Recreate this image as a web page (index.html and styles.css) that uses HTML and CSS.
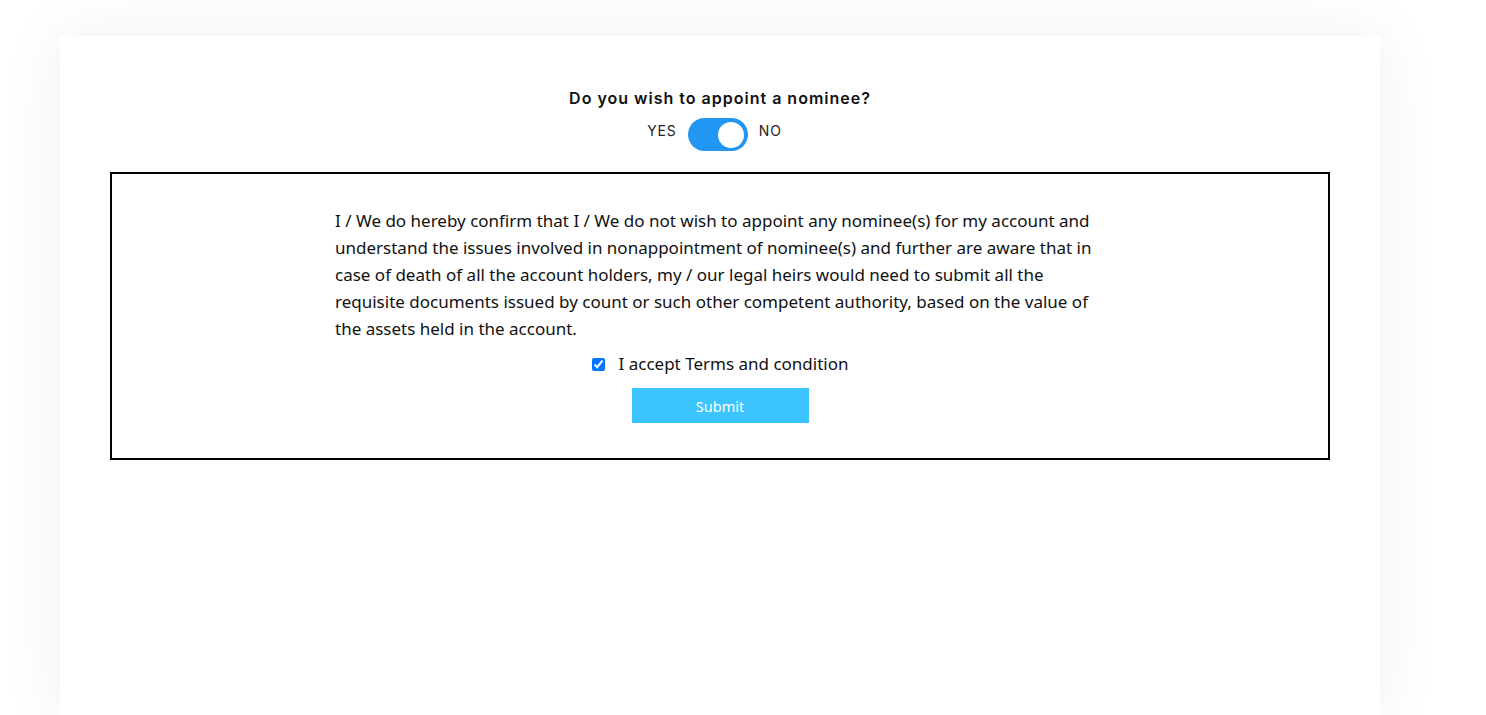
FILE: index.html
```html
<!DOCTYPE html>
<html lang="en">
<head>
<meta charset="utf-8">
<title>Nominee</title>
<link rel="stylesheet" href="styles.css">
</head>
<body>
<div class="page">
  <main class="card">
    <div class="question">
      <h2 class="question-title">Do you wish to appoint a nominee?</h2>
      <div class="toggle-row">
        <span class="toggle-label">YES</span>
        <span class="toggle on"><span class="knob"></span></span>
        <span class="toggle-label">NO</span>
      </div>
    </div>
    <section class="declaration">
      <p class="decl-text">I / We do hereby confirm that I / We do not wish to appoint any nominee(s) for my account and understand the issues involved in nonappointment of nominee(s) and further are aware that in case of death of all the account holders, my / our legal heirs would need to submit all the requisite documents issued by count or such other competent authority, based on the value of the assets held in the account.</p>
      <label class="accept">
        <input type="checkbox" checked class="accept-box">
        <span>I accept Terms and condition</span>
      </label>
      <button class="submit" type="button">Submit</button>
    </section>
  </main>
</div>
</body>
</html>
```
FILE: styles.css
```css
html, body {
  margin: 0;
  padding: 0;
  background: #fff;
}
body {
  font-family: "Noto Sans", "Open Sans", sans-serif;
  color: #111;
  overflow: hidden;
}
.page {
  padding: 36px 0 0 60px;
  height: 715px;
  box-sizing: border-box;
}
.card {
  width: 1320px;
  height: 679px;
  background: #fff;
  box-shadow: 0 0 60px rgba(0, 0, 0, 0.07);
  padding: 52px 50px 0;
  box-sizing: border-box;
}
.question {
  display: flex;
  flex-direction: column;
  align-items: center;
}
.question-title {
  margin: 0;
  font-family: "Inter", "Noto Sans", sans-serif;
  font-weight: 600;
  font-size: 16px;
  line-height: 20px;
  color: #111;
  letter-spacing: 1px;
}
.toggle-row {
  display: flex;
  align-items: center;
  gap: 11px;
  margin-top: 10px;
  padding-right: 11px;
}
.toggle-label {
  font-family: "Inter", "Noto Sans", sans-serif;
  font-size: 14px;
  line-height: 18px;
  color: #222;
  letter-spacing: 0.9px;
  margin-bottom: 8px;
}
.toggle {
  width: 60px;
  height: 33px;
  border-radius: 17px;
  background: #2196f3;
  display: flex;
  align-items: center;
  justify-content: flex-end;
  padding: 0 4px;
  box-sizing: border-box;
}
.knob {
  width: 26px;
  height: 26px;
  border-radius: 50%;
  background: #fff;
}
.declaration {
  margin-top: 21px;
  border: 2px solid #000;
  height: 288px;
  box-sizing: border-box;
  display: flex;
  flex-direction: column;
  align-items: center;
  padding-top: 33px;
}
.decl-text {
  margin: 0;
  width: 770px;
  font-size: 17px;
  line-height: 27px;
  color: #111;
}
.accept {
  display: flex;
  align-items: center;
  margin-top: 10px;
  font-size: 17px;
  line-height: 24px;
  color: #111;
}
.accept-box {
  width: 13px;
  height: 13px;
  margin: 0 14px 0 0;
  accent-color: #0075ff;
}
.submit {
  margin-top: 12px;
  width: 177px;
  height: 35px;
  border: 0;
  background: #3cc4ff;
  color: #fff;
  font-family: "Noto Sans", sans-serif;
  font-size: 14.5px;
}
```
